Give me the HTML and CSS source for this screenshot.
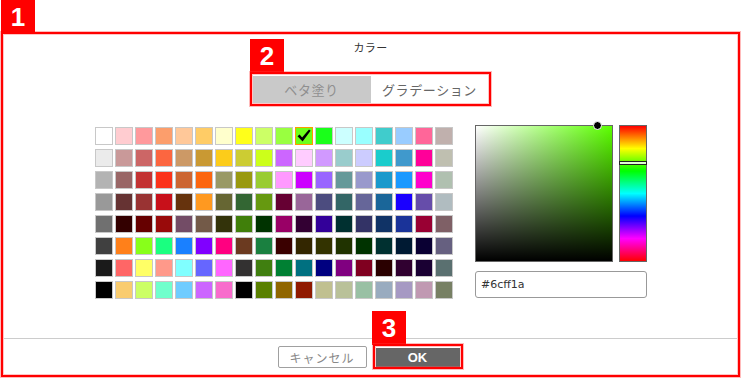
FILE: index.html
```html
<!DOCTYPE html>
<html lang="ja">
<head>
<meta charset="utf-8">
<title>カラー</title>
<link rel="stylesheet" href="styles.css">
</head>
<body>
<div class="dialog">
  <div class="title">カラー</div>
  <div class="tabs">
    <div class="tab active">ベタ塗り</div>
    <div class="tab">グラデーション</div>
  </div>
  <div class="content">
    <div class="grid">
      <div class="cell" style="background:#ffffff"></div><div class="cell" style="background:#ffccd0"></div><div class="cell" style="background:#ff999c"></div><div class="cell" style="background:#fc9e6c"></div><div class="cell" style="background:#ffc899"></div><div class="cell" style="background:#ffcc66"></div><div class="cell" style="background:#ffffcc"></div><div class="cell" style="background:#ffff1a"></div><div class="cell" style="background:#ccff66"></div><div class="cell" style="background:#99ff40"></div><div class="cell selected" style="background:#6cff1a"><svg viewBox="0 0 16 16" width="16" height="16"><path d="M1.5 8.2 L3.6 6.6 L6.1 9.6 L13 1.6 L14.6 2.8 L6.6 13.6 Z" fill="#000"/></svg></div><div class="cell" style="background:#1aff1a"></div><div class="cell" style="background:#ccffff"></div><div class="cell" style="background:#99ffff"></div><div class="cell" style="background:#40cccc"></div><div class="cell" style="background:#99ccff"></div><div class="cell" style="background:#ff6699"></div><div class="cell" style="background:#c0b0ad"></div>
      <div class="cell" style="background:#ebebeb"></div><div class="cell" style="background:#c99999"></div><div class="cell" style="background:#cc6666"></div><div class="cell" style="background:#fc6640"></div><div class="cell" style="background:#cc9966"></div><div class="cell" style="background:#c99933"></div><div class="cell" style="background:#fccc1a"></div><div class="cell" style="background:#cccc33"></div><div class="cell" style="background:#ccff1a"></div><div class="cell" style="background:#cc66ff"></div><div class="cell" style="background:#ffccff"></div><div class="cell" style="background:#d199ff"></div><div class="cell" style="background:#99cccc"></div><div class="cell" style="background:#ccccff"></div><div class="cell" style="background:#1acccc"></div><div class="cell" style="background:#4099cc"></div><div class="cell" style="background:#ff0099"></div><div class="cell" style="background:#bfbfb0"></div>
      <div class="cell" style="background:#b3b3b3"></div><div class="cell" style="background:#996666"></div><div class="cell" style="background:#c33333"></div><div class="cell" style="background:#fb331a"></div><div class="cell" style="background:#cc6633"></div><div class="cell" style="background:#fc6610"></div><div class="cell" style="background:#999966"></div><div class="cell" style="background:#999910"></div><div class="cell" style="background:#99cc33"></div><div class="cell" style="background:#ff99ff"></div><div class="cell" style="background:#cc00ff"></div><div class="cell" style="background:#9966ff"></div><div class="cell" style="background:#669999"></div><div class="cell" style="background:#9999cc"></div><div class="cell" style="background:#1a99cc"></div><div class="cell" style="background:#1a99ff"></div><div class="cell" style="background:#ff00cc"></div><div class="cell" style="background:#b0c0b0"></div>
      <div class="cell" style="background:#999999"></div><div class="cell" style="background:#663333"></div><div class="cell" style="background:#993333"></div><div class="cell" style="background:#c8101a"></div><div class="cell" style="background:#66330d"></div><div class="cell" style="background:#ff9920"></div><div class="cell" style="background:#666633"></div><div class="cell" style="background:#336633"></div><div class="cell" style="background:#669910"></div><div class="cell" style="background:#660033"></div><div class="cell" style="background:#996699"></div><div class="cell" style="background:#4c4c7f"></div><div class="cell" style="background:#336666"></div><div class="cell" style="background:#666699"></div><div class="cell" style="background:#1a6699"></div><div class="cell" style="background:#1a00ff"></div><div class="cell" style="background:#664daa"></div><div class="cell" style="background:#b0bcc0"></div>
      <div class="cell" style="background:#707070"></div><div class="cell" style="background:#330000"></div><div class="cell" style="background:#660000"></div><div class="cell" style="background:#990a0a"></div><div class="cell" style="background:#734c66"></div><div class="cell" style="background:#735a48"></div><div class="cell" style="background:#33330a"></div><div class="cell" style="background:#407f0a"></div><div class="cell" style="background:#003300"></div><div class="cell" style="background:#990066"></div><div class="cell" style="background:#330033"></div><div class="cell" style="background:#330099"></div><div class="cell" style="background:#003030"></div><div class="cell" style="background:#333366"></div><div class="cell" style="background:#103366"></div><div class="cell" style="background:#1a3399"></div><div class="cell" style="background:#990033"></div><div class="cell" style="background:#7f6066"></div>
      <div class="cell" style="background:#404040"></div><div class="cell" style="background:#ff801a"></div><div class="cell" style="background:#88ff1a"></div><div class="cell" style="background:#1aff80"></div><div class="cell" style="background:#1a80ff"></div><div class="cell" style="background:#8000ff"></div><div class="cell" style="background:#ff0080"></div><div class="cell" style="background:#6b3a20"></div><div class="cell" style="background:#1a8040"></div><div class="cell" style="background:#3a0000"></div><div class="cell" style="background:#332600"></div><div class="cell" style="background:#333300"></div><div class="cell" style="background:#203300"></div><div class="cell" style="background:#003300"></div><div class="cell" style="background:#003030"></div><div class="cell" style="background:#001a33"></div><div class="cell" style="background:#0a0033"></div><div class="cell" style="background:#666080"></div>
      <div class="cell" style="background:#1a1a1a"></div><div class="cell" style="background:#ff6666"></div><div class="cell" style="background:#ffff66"></div><div class="cell" style="background:#ff998a"></div><div class="cell" style="background:#80ffff"></div><div class="cell" style="background:#6666ff"></div><div class="cell" style="background:#ff66ff"></div><div class="cell" style="background:#333131"></div><div class="cell" style="background:#407f10"></div><div class="cell" style="background:#008033"></div><div class="cell" style="background:#007080"></div><div class="cell" style="background:#000080"></div><div class="cell" style="background:#800080"></div><div class="cell" style="background:#800020"></div><div class="cell" style="background:#2a0000"></div><div class="cell" style="background:#300030"></div><div class="cell" style="background:#1a0033"></div><div class="cell" style="background:#5a7070"></div>
      <div class="cell" style="background:#000000"></div><div class="cell" style="background:#f9cc6f"></div><div class="cell" style="background:#ccff66"></div><div class="cell" style="background:#70ffcc"></div><div class="cell" style="background:#6fccff"></div><div class="cell" style="background:#cc66ff"></div><div class="cell" style="background:#f86ccc"></div><div class="cell" style="background:#000000"></div><div class="cell" style="background:#5a8000"></div><div class="cell" style="background:#906600"></div><div class="cell" style="background:#901a00"></div><div class="cell" style="background:#c0c090"></div><div class="cell" style="background:#b9c199"></div><div class="cell" style="background:#99c0a4"></div><div class="cell" style="background:#99abbf"></div><div class="cell" style="background:#a699c3"></div><div class="cell" style="background:#c099b2"></div><div class="cell" style="background:#778064"></div>
    </div>
    <div class="picker">
      <div class="picker-row">
        <div class="sv"><span class="sv-dot"></span></div>
        <div class="hue"><span class="hue-mark"></span></div>
      </div>
      <div class="hex">#6cff1a</div>
    </div>
  </div>
  <div class="footer">
    <button class="btn cancel">キャンセル</button>
    <button class="btn ok">OK</button>
  </div>
</div>

<div class="badge b1">1</div>
<div class="badge b2">2</div>
<div class="badge b3">3</div>
<div class="hl hl2"></div>
<div class="hl hl3"></div>
</body>
</html>
```
FILE: styles.css
```css
html, body {
  margin: 0;
  padding: 0;
  background: #fff;
}
body {
  width: 743px;
  height: 379px;
  position: relative;
  overflow: hidden;
  font-family: "Noto Sans CJK JP", "Noto Sans", sans-serif;
  color: #333;
}
.dialog {
  box-sizing: border-box;
  width: 739px;
  height: 345px;
  margin: 32px 0 0 1px;
  border: 2px solid #ff0000;
  box-shadow: 0 0 0 1px rgba(255, 60, 60, 0.35), inset 0 0 0 1px rgba(255, 90, 90, 0.35);
  display: flex;
  flex-direction: column;
}
.title {
  height: 26px;
  line-height: 26px;
  text-align: center;
  font-size: 11px;
  letter-spacing: 0.3px;
  color: #333;
}
.tabs {
  display: flex;
  align-self: center;
  margin-top: 16px;
  height: 27px;
}
.tab {
  width: 118px;
  height: 27px;
  line-height: 27px;
  text-align: center;
  font-size: 13px;
  letter-spacing: 0.6px;
  color: #666;
  background: #fff;
}
.tab.active {
  background: #c9c9c9;
  color: #8f8f8f;
}
.content {
  display: flex;
  justify-content: center;
  gap: 22px;
  margin-top: 22px;
  height: 174px;
  padding-left: 1px;
}
.grid {
  display: grid;
  grid-template-columns: repeat(18, 18px);
  grid-auto-rows: 18px;
  gap: 4px 2px;
  margin-top: 2px;
  align-self: flex-start;
}
.cell {
  box-sizing: border-box;
  border: 1px solid #c8c8c8;
  display: flex;
  align-items: center;
  justify-content: center;
}
.cell.selected {
  border-color: #ff9a00;
}
.cell svg {
  display: block;
}
.picker {
  width: 172px;
  display: flex;
  flex-direction: column;
}
.picker-row {
  display: flex;
  gap: 6px;
  height: 137px;
}
.sv {
  position: relative;
  box-sizing: border-box;
  width: 138px;
  height: 137px;
  border: 1px solid #666;
  background:
    linear-gradient(to top, #000, rgba(0, 0, 0, 0)),
    linear-gradient(to right, #fff, hsl(98.5, 100%, 50%));
}
.sv-dot {
  position: absolute;
  left: 117px;
  top: -5px;
  width: 7px;
  height: 7px;
  border-radius: 50%;
  background: #000;
  border: 1px solid #fff;
}
.hue {
  position: relative;
  box-sizing: border-box;
  width: 28px;
  height: 137px;
  border: 1px solid #666;
  background: linear-gradient(to bottom, #f00, #ff0, #0f0, #0ff, #00f, #f0f, #f00);
}
.hue-mark {
  position: absolute;
  left: -1px;
  right: -1px;
  top: 35px;
  height: 2px;
  background: #dfffd0;
  border: 1px solid #222;
}
.hex {
  box-sizing: border-box;
  margin-top: 9px;
  height: 27px;
  line-height: 25px;
  border: 1px solid #999;
  border-radius: 3px;
  padding-left: 5px;
  font-family: "DejaVu Sans", sans-serif;
  font-size: 11px;
  color: #333;
}
.footer {
  margin: 39px 1px 0;
  border-top: 1px solid #cccccc;
  padding-top: 7px;
  display: flex;
  justify-content: center;
  align-items: center;
  gap: 9px;
}
.btn {
  box-sizing: border-box;
  font-family: "Noto Sans CJK JP", "Noto Sans", sans-serif;
  padding: 0;
  margin: 0;
  cursor: pointer;
}
.cancel {
  width: 89px;
  height: 22px;
  border: 1px solid #a0a0a0;
  border-radius: 2px;
  background: #fff;
  color: #888;
  font-size: 12px;
  letter-spacing: 1px;
  margin-left: -4px;
}
.ok {
  width: 84px;
  height: 19px;
  border: none;
  background: #666;
  color: #fff;
  font-family: "Liberation Sans", Arial, sans-serif;
  font-weight: bold;
  font-size: 13px;
}
.badge {
  position: absolute;
  width: 34px;
  height: 34px;
  background: #ff0000;
  color: #fff;
  font-family: "Liberation Sans", Arial, sans-serif;
  font-weight: bold;
  font-size: 26px;
  line-height: 34px;
  text-align: center;
}
.b1 { left: 1px; top: 0; }
.b2 { left: 250px; top: 39px; }
.b3 { left: 372px; top: 311px; }
.hl {
  position: absolute;
  box-sizing: border-box;
  border: 2px solid #ff0000;
  box-shadow: 0 0 0 1px rgba(255, 60, 60, 0.35), inset 0 0 0 1px rgba(255, 90, 90, 0.35);
}
.hl2 { left: 250px; top: 72px; width: 241px; height: 34px; }
.hl3 { left: 373px; top: 344px; width: 90px; height: 25px; }
```
